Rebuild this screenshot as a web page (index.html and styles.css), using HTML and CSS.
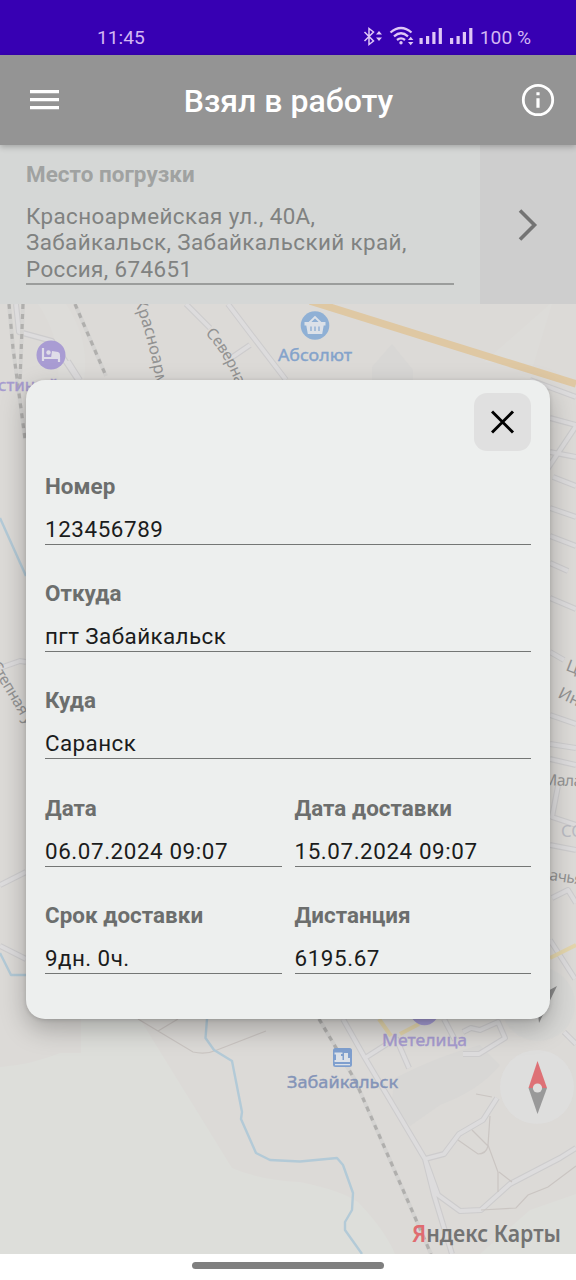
FILE: index.html
```html
<!DOCTYPE html>
<html lang="ru">
<head>
<meta charset="utf-8">
<title>Взял в работу</title>
<link rel="stylesheet" href="styles.css">
</head>
<body>
<div class="screen">
  <div class="status">
    <span class="status-time">11:45</span>
    <div class="status-right">
      <svg class="status-icons" width="112" height="22" viewBox="362 26 112 22">
        <g fill="none" stroke="#dfc6f6" stroke-width="1.5">
          <path d="M364.500 32L373.500 41L369 44.500V28.500L373.500 32L364.500 41"/>
          <path stroke-width="2.300" d="M390.500 32.500Q401 23.500 411.500 32.500M394 36.300Q401 30.300 408 36.300M397 40Q401 36.700 405 40"/>
        </g>
        <g fill="#dfc6f6">
          <path d="M376 34.500l3-3.500 3 3.500zM376 37.500l3 3.500 3-3.500zM408 40l2.700-3.200 2.700 3.200zM408 42l2.700 3.200 2.700-3.200z"/>
          <circle cx="401" cy="42.800" r="1.700"/>
          <path d="M419.500 38h3.200v6h-3.200zM426 36h3.200v8h-3.200zM432.300 32h3.200v12h-3.200zM438.700 28h3.200v16h-3.200zM450 38h3.200v6h-3.200zM456.500 36h3.200v8h-3.200zM462.800 32h3.200v12h-3.200zM469.200 28h3.200v16h-3.200z"/>
        </g>
      </svg>
      <span class="battery">100 %</span>
    </div>
  </div>

  <header class="toolbar">
    <svg width="30" height="20" viewBox="0 0 30 20"><path fill="#fff" d="M0 0h29v3.300H0zM0 8h29v3.300H0zM0 16h29v3.300H0z"/></svg>
    <h1 class="title">Взял в работу</h1>
    <svg width="34" height="34" viewBox="0 0 34 34"><circle cx="17" cy="17" r="14.700" fill="none" stroke="#fff" stroke-width="2.800"/><path fill="#fff" d="M15.400 9.300h3.200v3h-3.200zM15.400 15.300h3.200v9.500h-3.200z"/></svg>
  </header>

  <section class="place">
    <div class="place-body">
      <div class="place-label">Место погрузки</div>
      <div class="place-value">Красноармейская ул., 40А,<br>Забайкальск, Забайкальский край,<br>Россия, 674651</div>
    </div>
    <div class="place-next">
      <svg width="22" height="34" viewBox="0 0 22 34"><path d="M3 2.500L17.500 17L3 31.500" fill="none" stroke="#747474" stroke-width="3.600"/></svg>
    </div>
  </section>

  <main class="map">
    <svg class="map-canvas" viewBox="0 304 576 950">
      <rect y="304" width="576" height="950" fill="#dcdad7"/>
      <path class="green" d="M0 1067Q30 1065 60 1053H81V1019H140L232 1168Q260 1180 300 1182Q340 1190 358 1202Q385 1230 395 1254H0zM480 1254L530 1210L576 1194V1254z"/>
      <path fill="#d8d7d5" d="M395 1078Q440 1055 480 1045L500 1065Q480 1090 440 1105L410 1126L391 1105zM372 367L392 344L413 370V380H372z"/>
      <path fill="#dddcd9" d="M38 304H66Q90 340 84 380H58Q62 340 38 304zM484 362L550 304H552L533 366z"/>

      <g class="road-edge">
        <path d="M16 304L19 332L52 341L78 380M68 361L80 380M186 304L210 328M228 304L250 333L286 380M250 345L228 360"/>
        <path d="M0 885L26 872M0 668L20 661L26 662M0 946L26 959"/>
        <path d="M530 380L576 397M550 418L576 425M550 452L576 457M540 480L576 426M553 477L576 486M550 508L576 517M550 536L576 546M550 563L568 571M550 598L576 609M550 652L564 660M550 715L576 724M550 744L576 748M550 759L576 765M558 786L552 817L576 825M550 845L576 850M552 898L568 890L576 903M550 940L575 979"/>
        <path d="M343 1019L365 1058L425 1159L434 1195L452 1254M365 1058L387 1044M396 1038L409 1068M425 1159L444 1154L459 1134L483 1120L497 1098M425 1159L438 1195L460 1211L481 1210L510 1184L560 1158L576 1148M444 1019L455 1040M463 1032L471 1028L480 1030L498 1022L505 1038L479 1054H463M564 1032L576 1044"/>
      </g>
      <g class="road-core">
        <path d="M16 304L19 332L52 341L78 380M68 361L80 380M186 304L210 328M228 304L250 333L286 380M250 345L228 360"/>
        <path d="M0 885L26 872M0 668L20 661L26 662M0 946L26 959"/>
        <path d="M530 380L576 397M550 418L576 425M550 452L576 457M540 480L576 426M553 477L576 486M550 508L576 517M550 536L576 546M550 563L568 571M550 598L576 609M550 652L564 660M550 715L576 724M550 744L576 748M550 759L576 765M558 786L552 817L576 825M550 845L576 850M552 898L568 890L576 903M550 940L575 979"/>
        <path d="M343 1019L365 1058L425 1159L434 1195L452 1254M365 1058L387 1044M396 1038L409 1068M425 1159L444 1154L459 1134L483 1120L497 1098M425 1159L438 1195L460 1211L481 1210L510 1184L560 1158L576 1148M444 1019L455 1040M463 1032L471 1028L480 1030L498 1022L505 1038L479 1054H463M564 1032L576 1044"/>
      </g>
      <path class="path-thin" d="M138 1019L158 1031L193 1052Q206 1055 217 1050L266 1031M158 1031L178 1019M458 1140L478 1154Q486 1154 488 1146L472 1130M490 1116L488 1145L498 1172V1192M499 1172L512 1182M481 1210L516 1208L528 1195L548 1187L576 1166M476 1094L492 1097"/>

      <path class="highway" d="M310 301L576 384"/>
      <path class="yellow" d="M379 1019L391 1036M400 1034L419 1024M550 958L576 945"/>

      <path class="water" d="M0 518L26 576M0 953L11 975H26M207 1019L205.500 1038L214 1050L232 1061L242 1112L241 1119L256 1153L270 1160L300 1161.500L337 1158L343 1165L353 1193L352 1210L345 1222V1230L362 1254"/>

      <g class="rail-base">
        <path d="M9 304L13 348L25 439M23 304L20 380M75 304L106 376M319 1019L355 1080L431 1254"/>
      </g>
      <g class="rail">
        <path d="M9 304L13 348L25 439M23 304L20 380M75 304L106 376M319 1019L355 1080L431 1254"/>
      </g>

      <g class="street">
        <path id="s1" fill="none" d="M134 301Q150 340 158 395"/>
        <text><textPath href="#s1">Красноарм</textPath></text>
        <path id="s2" fill="none" d="M205 334Q226 354 240 396"/>
        <text class="tight"><textPath href="#s2">Северна</textPath></text>
        <text class="tight" transform="translate(-10 665) rotate(59)">Степная у</text>
        <text transform="translate(565 670) rotate(21)">Ц</text>
        <text transform="translate(557 697) rotate(25)">Ин</text>
        <text class="tight" transform="translate(543 785) rotate(2)">Мала</text>
        <text class="tight" transform="translate(549 880) rotate(8)">ачья</text>
        <text class="faint" x="561" y="837">СО</text>
      </g>

      <circle cx="51" cy="355" r="14.500" fill="#a99cd3"/>
      <path d="M43 348V361M44 358H60M59 357V362" stroke="#dfdce8" stroke-width="2.200" fill="none"/>
      <circle cx="48.500" cy="352.500" r="2.200" fill="#dfdce8"/>
      <path fill="#dfdce8" d="M52 351l6 1q2 .5 2 3v3h-9z"/>
      <text class="poi violet" x="-2" y="391">стиный</text>

      <circle cx="315" cy="325.500" r="14.300" fill="#8fb0d5"/>
      <path fill="#dce1e8" d="M304.500 322h21v3.500h-1.800l-1.500 8.500h-14.400l-1.500-8.500h-1.800z"/>
      <path d="M309 323L315 317L321 323" fill="none" stroke="#dce1e8" stroke-width="1.800"/>
      <path d="M311 326.500V331M315 326.500V331M319 326.500V331" stroke="#8fb0d5" stroke-width="1.400"/>
      <text class="poi blue" x="278" y="361" textLength="74" lengthAdjust="spacingAndGlyphs">Абсолют</text>

      <circle cx="424.500" cy="1011" r="14.300" fill="#a49bd3"/>
      <text class="poi violet" x="382" y="1046" textLength="85" lengthAdjust="spacingAndGlyphs">Метелица</text>

      <rect x="333" y="1048" width="19" height="19" rx="2.500" fill="#7f9fce"/>
      <path fill="#dce1e8" d="M334.500 1052.500h8v1.500h-1.500v2h1.500v4h1.500v2h-9.500v-2h1.500v-5.500h-1.500zM344 1053h4v5h2v4h-6zM335 1064h15v1.200h-15z"/>
      <text class="poi station" x="287" y="1088" textLength="111" lengthAdjust="spacingAndGlyphs">Забайкальск</text>

      <circle cx="538" cy="1004" r="37" fill="#d7d7d6" opacity=".75"/>
      <path d="M557 986L529 1001L537 1005L539 1023z" fill="#8c8c8c"/>
      <circle cx="537" cy="1087" r="37" fill="#dedede" opacity=".8"/>
      <path d="M528.500 1088L537.500 1061L547 1088z" fill="#de7176"/>
      <path d="M528.500 1088H547L537.500 1114z" fill="#999"/>
      <circle cx="537.500" cy="1088" r="4.600" fill="#dfdedd"/>

      <text class="brand" x="412" y="1242" textLength="149" lengthAdjust="spacingAndGlyphs"><tspan fill="#e06b70">Я</tspan>ндекс Карты</text>
    </svg>
  </main>

  <footer class="nav"><div class="nav-pill"></div></footer>

  <div class="dialog">
    <button class="close" aria-label="Закрыть">
      <svg width="24" height="24" viewBox="0 0 24 24"><path d="M1 1.500L22 22.500M22 1.500L1 22.500" stroke="#000" stroke-width="3"/></svg>
    </button>
    <div class="fields">
      <div class="field wide"><div class="label">Номер</div><div class="value number">123456789</div></div>
      <div class="field wide"><div class="label">Откуда</div><div class="value">пгт Забайкальск</div></div>
      <div class="field wide"><div class="label">Куда</div><div class="value">Саранск</div></div>
      <div class="field"><div class="label">Дата</div><div class="value number">06.07.2024 09:07</div></div>
      <div class="field"><div class="label">Дата доставки</div><div class="value number">15.07.2024 09:07</div></div>
      <div class="field"><div class="label">Срок доставки</div><div class="value">9дн. 0ч.</div></div>
      <div class="field"><div class="label">Дистанция</div><div class="value number">6195.67</div></div>
    </div>
  </div>
</div>
</body>
</html>
```
FILE: styles.css
```css
* { box-sizing: border-box; }

body {
  margin: 0;
  font-family: Roboto, "Noto Sans", sans-serif;
}

.screen {
  position: relative;
  display: flex;
  flex-direction: column;
  width: 576px;
  height: 1280px;
  overflow: hidden;
  background: #fff;
}

.status {
  flex: 0 0 55px;
  display: flex;
  justify-content: space-between;
  padding: 26px 45px 0 97px;
  background: #3700b3;
  color: #d3b7f3;
  font-size: 19.2px;
  line-height: 23px;
}

.status-right { display: flex; gap: 6px; }
.status-icons { display: block; }

.toolbar {
  position: relative;
  z-index: 1;
  flex: 0 0 90px;
  display: flex;
  align-items: center;
  justify-content: space-between;
  padding: 0 21px 0 30px;
  background: #949494;
  box-shadow: 0 2px 6px rgba(0, 0, 0, .24);
}

.title {
  margin: 2px 4px 0 0;
  color: #fff;
  font-size: 32px;
  font-weight: 500;
  line-height: 38px;
}

.place {
  flex: 0 0 159px;
  display: flex;
  background: #d5d7d6;
}

.place-body { flex: 1; padding: 16px 26px 0; }

.place-label {
  color: #a0a2a1;
  font-size: 22.4px;
  font-weight: 700;
  line-height: 26px;
  letter-spacing: .06px;
}

.place-value {
  margin-top: 16px;
  padding-bottom: 1px;
  border-bottom: 2px solid #9b9d9c;
  color: #808281;
  font-size: 22.4px;
  line-height: 26.3px;
  letter-spacing: .4px;
  white-space: nowrap;
}

.place-next {
  flex: 0 0 96px;
  display: flex;
  align-items: center;
  justify-content: center;
  background: #cecece;
}

.map { flex: 0 0 950px; }
.map-canvas { display: block; width: 576px; height: 950px; }

.green { fill: #dddeda; }
.road-edge path { fill: none; stroke: #cdcccd; stroke-width: 6px; stroke-linejoin: round; }
.road-core path { fill: none; stroke: #dddcdd; stroke-width: 3.8px; stroke-linejoin: round; }
.path-thin { fill: none; stroke: #cac5c2; stroke-width: 1.2px; }
.highway { fill: none; stroke: #dfc8a3; stroke-width: 7.5px; }
.yellow { fill: none; stroke: #e3d5ac; stroke-width: 4px; }
.water { fill: none; stroke: #b3cad7; stroke-width: 2.4px; stroke-linejoin: round; }
.rail-base path { fill: none; stroke: #d4d3d1; stroke-width: 4px; }
.rail path { fill: none; stroke: #b0afad; stroke-width: 3.2px; stroke-dasharray: 5 5; }

.street text { fill: #929292; font: 16.5px "Noto Sans", sans-serif; }
.street .tight { font-size: 15.5px; letter-spacing: -.4px; }
.street .faint { fill: #b9bac2; }
.poi { font: 400 17px "Noto Sans", sans-serif; stroke-width: .4px; }
.violet { fill: #a69bcf; stroke: #a69bcf; }
.blue { fill: #84a3cb; stroke: #84a3cb; }
.station { fill: #8494b8; stroke: #8494b8; }
.brand { fill: #737373; font: 600 24px "Noto Sans", sans-serif; }

.nav {
  flex: 0 0 26px;
  display: flex;
  justify-content: center;
  padding-top: 8px;
  background: #fff;
}

.nav-pill { width: 192px; height: 7px; border-radius: 4px; background: #7f7f7f; }

/* Order details sheet shown over the map */
.dialog {
  position: absolute;
  z-index: 2;
  left: 26px;
  top: 380px;
  display: flex;
  flex-direction: column;
  width: 524px;
  height: 639px;
  padding: 13px 19px 0;
  border-radius: 19px;
  background: #edefee;
  box-shadow: 0 10px 26px rgba(0, 0, 0, .26), 0 1px 4px rgba(0, 0, 0, .14);
}

.close {
  align-self: flex-end;
  display: flex;
  align-items: center;
  justify-content: center;
  width: 57px;
  height: 58px;
  padding: 0;
  border: 0;
  border-radius: 13px;
  background: #e0e0e0;
}

.fields {
  display: grid;
  grid-template-columns: 1fr 1fr;
  grid-auto-rows: 107.2px;
  column-gap: 13px;
  margin-top: 22px;
}

.wide { grid-column: 1 / -1; }

.label {
  color: #6c6e6d;
  font-size: 22.4px;
  font-weight: 700;
  line-height: 26px;
  letter-spacing: .04px;
}

.value {
  margin-top: 17px;
  height: 29px;
  border-bottom: 1.6px solid #747675;
  color: #1b1c1c;
  font-size: 22.4px;
  line-height: 26px;
  letter-spacing: .43px;
}

.number { letter-spacing: .58px; }
```
